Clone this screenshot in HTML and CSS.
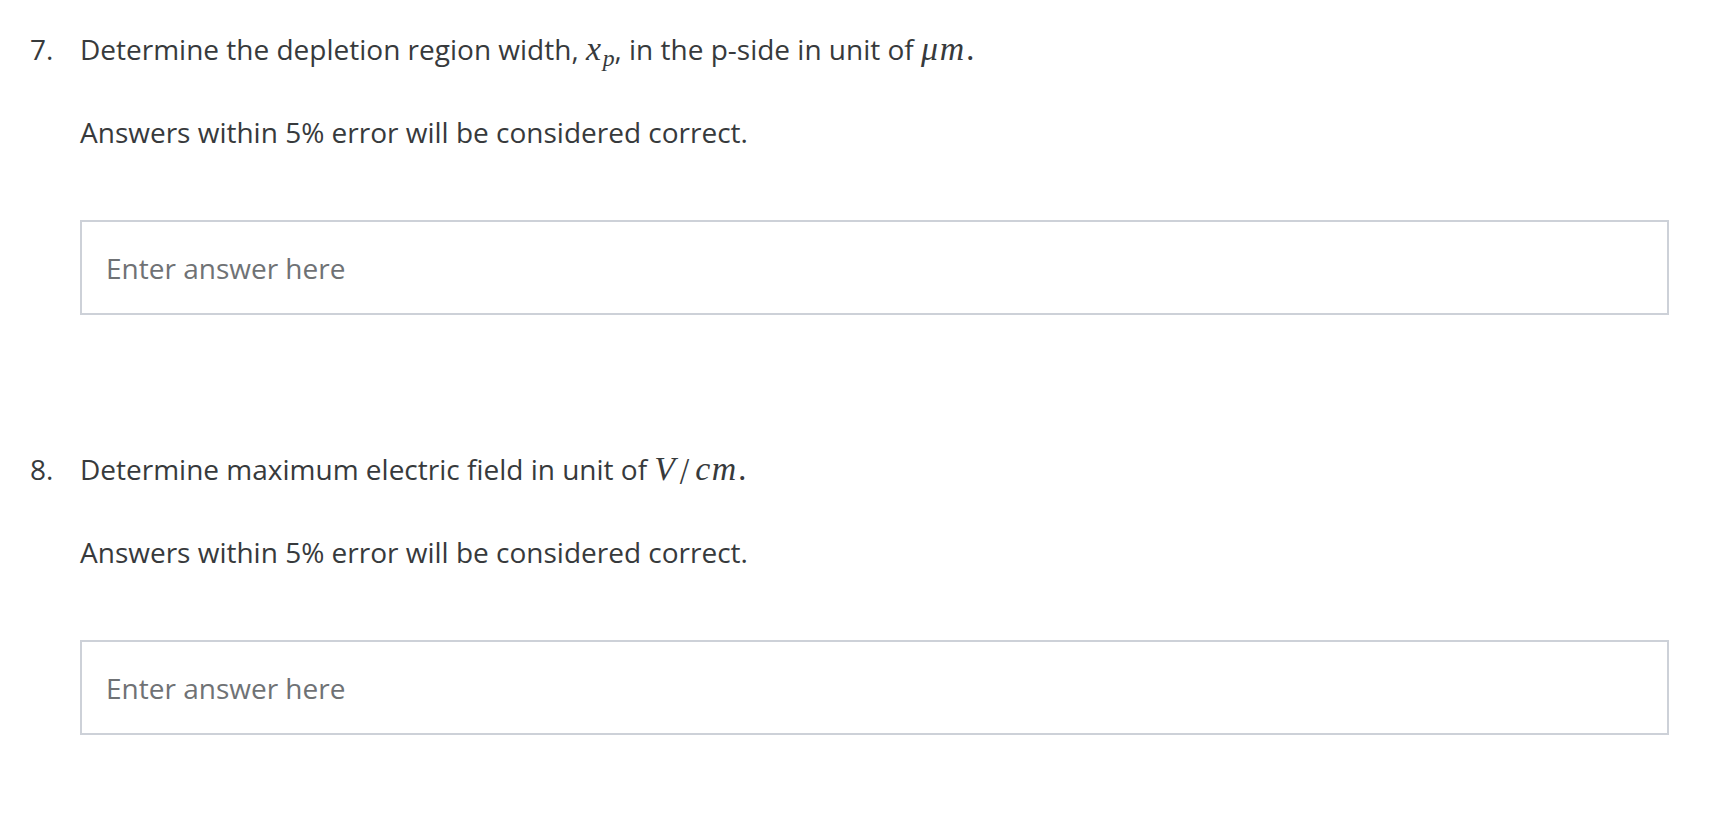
FILE: index.html
```html
<!DOCTYPE html>
<html lang="en">
<head>
<meta charset="utf-8">
<title>Questions</title>
<link rel="stylesheet" href="styles.css">
</head>
<body>
<main class="page">
  <section class="question">
    <div class="qnum">7.</div>
    <div class="qbody">
      <p class="prompt">Determine the depletion region width, <span class="math"><span class="mi">x</span><sub class="msub">p</sub></span>, in the p-side in unit of <span class="math"><span class="mi wide">μm</span><span class="mo">.</span></span></p>
      <p class="note">Answers within 5% error will be considered correct.</p>
      <input class="answer" type="text" placeholder="Enter answer here">
    </div>
  </section>
  <section class="question">
    <div class="qnum">8.</div>
    <div class="qbody">
      <p class="prompt">Determine maximum electric field in unit of <span class="math"><span class="mi">V</span><span class="mo slash">/</span><span class="mi wide">cm</span><span class="mo">.</span></span></p>
      <p class="note">Answers within 5% error will be considered correct.</p>
      <input class="answer" type="text" placeholder="Enter answer here">
    </div>
  </section>
</main>
</body>
</html>
```

FILE: styles.css
```css
html, body {
  margin: 0;
  padding: 0;
  background: #ffffff;
}

body {
  font-family: "Open Sans", "Noto Sans", sans-serif;
  font-size: 28px;
  line-height: 42px;
  color: #373a3c;
}

.page {
  padding: 28px 41px 20px 30px;
}

.question {
  display: flex;
  margin-bottom: 133px;
}

.question:last-child {
  margin-bottom: 0;
}

.qnum {
  width: 50px;
  flex: 0 0 50px;
}

.qbody {
  flex: 1;
  display: flex;
  flex-direction: column;
}

.prompt,
.note {
  margin: 0;
}

.note {
  margin-top: 41px;
  margin-bottom: 67px;
}

.math {
  font-family: "Liberation Serif", "DejaVu Serif", serif;
  font-size: 1.21em;
  line-height: 1;
  white-space: nowrap;
}

.mi {
  font-style: italic;
  letter-spacing: 0.02em;
}

.mi.wide {
  letter-spacing: 0.05em;
}

.msub {
  font-style: italic;
  font-size: 0.7em;
  vertical-align: -0.25em;
  line-height: 0;
  padding-left: 1px;
}

.mo {
  font-style: normal;
}

.slash {
  display: inline-block;
  padding: 0 6px 0 4px;
  transform: scaleY(1.15) translateY(2px);
}

.answer {
  box-sizing: border-box;
  width: 100%;
  height: 95px;
  margin: 0;
  padding: 0 24px;
  border: 2px solid #cdd1d8;
  border-radius: 0;
  font-family: "Open Sans", "Noto Sans", sans-serif;
  font-size: 28px;
  color: #373a3c;
  background: #fff;
  outline: none;
}

.answer::placeholder {
  color: #6f7275;
  opacity: 1;
}
```
